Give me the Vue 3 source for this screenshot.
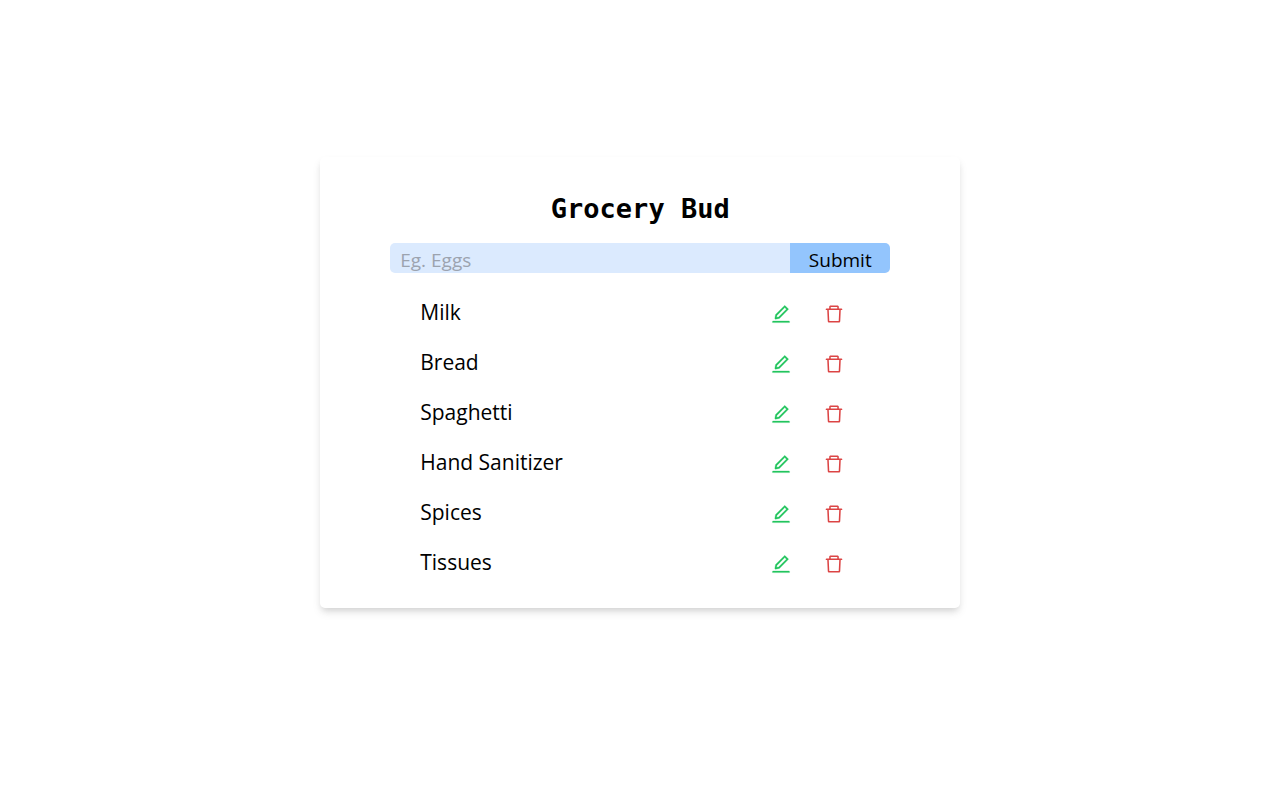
<script setup>
import { ref } from 'vue'

const draft = ref('')
const items = ref(
  ['Milk', 'Bread', 'Spaghetti', 'Hand Sanitizer', 'Spices', 'Tissues'].map((name, id) => ({ id, name }))
)
const editing = ref(null)

function save() {
  const name = draft.value.trim()
  if (!name) return
  if (editing.value) {
    editing.value.name = name
    editing.value = null
  } else {
    items.value.push({ id: Date.now(), name })
  }
  draft.value = ''
}

function edit(item) {
  editing.value = item
  draft.value = item.name
}

function remove(item) {
  items.value = items.value.filter((entry) => entry.id !== item.id)
}
</script>

<template>
  <main class="page">
    <section class="card">
      <h1 class="title">Grocery Bud</h1>
      <form class="form" @submit.prevent="save">
        <input v-model="draft" class="field" type="text" placeholder="Eg. Eggs" aria-label="Grocery item" />
        <button class="submit" type="submit">Submit</button>
      </form>
      <ul class="list">
        <li v-for="item in items" :key="item.id" class="row">
          <span class="name">{{ item.name }}</span>
          <span class="actions">
            <button class="icon edit" type="button" :aria-label="`Edit ${item.name}`" @click="edit(item)">
              <svg viewBox="0 0 1024 1024" fill="currentColor" stroke="currentColor" stroke-width="12" aria-hidden="true">
                <path d="M257.7 752c2 0 4-.2 6-.5L431.9 722c2-.4 3.9-1.3 5.3-2.8l423.9-423.9a9.96 9.96 0 0 0 0-14.1L694.9 114.9c-1.9-1.9-4.4-2.9-7.1-2.9s-5.2 1-7.1 2.9L256.8 538.8c-1.5 1.5-2.4 3.3-2.8 5.3l-29.5 168.2a33.5 33.5 0 0 0 9.4 29.8c6.6 6.4 14.9 9.9 23.8 9.9zm67.4-174.4L687.8 215l73.3 73.3-362.7 362.6-88.9 15.7 15.6-89zM880 836H144c-17.7 0-32 14.3-32 32v36c0 4.4 3.6 8 8 8h784c4.4 0 8-3.6 8-8v-36c0-17.7-14.3-32-32-32z" />
              </svg>
            </button>
            <button class="icon delete" type="button" :aria-label="`Delete ${item.name}`" @click="remove(item)">
              <svg viewBox="0 0 1024 1024" fill="currentColor" aria-hidden="true">
                <path d="M360 184h-8c4.4 0 8-3.6 8-8v8h304v-8c0 4.4 3.6 8 8 8h-8v72h72v-80c0-35.3-28.7-64-64-64H352c-35.3 0-64 28.7-64 64v80h72v-72zm504 72H160c-17.7 0-32 14.3-32 32v32c0 4.4 3.6 8 8 8h60.4l24.7 523c1.6 34.1 29.8 61 63.9 61h454c34.2 0 62.3-26.8 63.9-61l24.7-523H888c4.4 0 8-3.6 8-8v-32c0-17.7-14.3-32-32-32zM731.3 840H292.7l-24.2-512h487l-24.2 512z" />
              </svg>
            </button>
          </span>
        </li>
      </ul>
    </section>
  </main>
</template>

<style>
body {
  background: #fff;
}
</style>

<style scoped>
.page {
  padding: 157px 0 40px;
  font-family: "Segoe UI", "Open Sans", "Noto Sans", sans-serif;
  color: #000;
}
.card {
  box-sizing: border-box;
  width: 50%;
  min-width: 480px;
  max-width: 640px;
  margin: 0 25%;
  padding: 32px 70px 20px;
  border-radius: 5px;
  background: #fff;
  box-shadow: 0 5px 10px -1px rgba(0, 0, 0, 0.1), 0 4px 6px -2px rgba(0, 0, 0, 0.1);
}
.title {
  margin: 0 0 14px;
  font-family: Consolas, "DejaVu Sans Mono", monospace;
  font-size: 27px;
  font-weight: 700;
  line-height: 40px;
  text-align: center;
}
.form {
  display: flex;
  height: 30px;
  border-radius: 5px;
  overflow: hidden;
}
.field,
.submit {
  box-sizing: border-box;
  border: 0;
  font-family: inherit;
  font-size: 19px;
  line-height: 26px;
  color: #000;
}
.field {
  flex: 1;
  min-width: 0;
  padding: 4px 10px 0;
  background: #dbeafe;
  outline: none;
}
.field::placeholder {
  color: #9ca3af;
  opacity: 1;
}
.submit {
  width: 100px;
  padding: 4px 0 0;
  background: #93c5fd;
  cursor: pointer;
}
.list {
  margin: 15px 0 0;
  padding: 0 45px 0 30px;
  list-style: none;
}
.row {
  display: flex;
  align-items: center;
  justify-content: space-between;
  height: 50px;
}
.name {
  padding-bottom: 2px;
  font-size: 21px;
  line-height: 30px;
}
.actions {
  display: flex;
  gap: 31px;
}
.icon {
  display: flex;
  padding: 2px 0 0;
  border: 0;
  background: none;
  cursor: pointer;
}
.icon svg {
  width: 22px;
  height: 22px;
}
.edit {
  color: #22c55e;
}
.delete {
  color: #dc4444;
}
</style>
